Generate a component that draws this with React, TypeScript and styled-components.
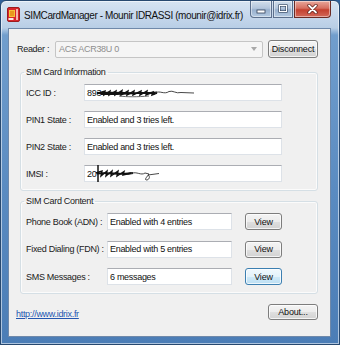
import React from 'react';
import styled, { createGlobalStyle } from 'styled-components';

const Global = createGlobalStyle`
  html, body { margin: 0; padding: 0; }
  body {
    width: 340px;
    height: 345px;
    overflow: hidden;
    background: #2f609a;
    font-family: "Liberation Sans", Arial, sans-serif;
  }
`;

const Window = styled.div`
  box-sizing: border-box;
  width: 340px;
  height: 345px;
  display: flex;
  flex-direction: column;
  padding: 0 8px 7px 7px;
  border: 1px solid #27486f;
  border-radius: 6px 6px 0 0;
  background: linear-gradient(
    180deg,
    #d6e3f1 0px,
    #c7d8ec 14px,
    #b8cee6 27px,
    #719ecd 34px,
    #5a8bc1 55%,
    #4b7db6 100%
  );
  box-shadow: inset 0 0 0 1px rgba(255, 255, 255, 0.55);
`;

const TitleBar = styled.div`
  height: 27px;
  display: flex;
  align-items: center;
  gap: 4px;
`;

const TitleText = styled.span`
  font-size: 10px;
  letter-spacing: -0.4px;
  color: #111;
  margin-top: 1px;
`;

const CaptionGroup = styled.div`
  margin-left: auto;
  align-self: flex-start;
  display: flex;
  gap: 1px;
`;

const CaptionButton = styled.div<{ $kind: 'min' | 'max' | 'close' }>`
  box-sizing: border-box;
  height: 17px;
  width: ${(p) => (p.$kind === 'close' ? 37 : p.$kind === 'min' ? 22 : 20)}px;
  display: flex;
  align-items: center;
  justify-content: center;
  border: 1px solid ${(p) => (p.$kind === 'close' ? '#6b2a24' : '#5b6f8c')};
  border-top: none;
  border-radius: ${(p) =>
    p.$kind === 'min' ? '0 0 0 4px' : p.$kind === 'close' ? '0 0 4px 0' : '0'};
  background: ${(p) =>
    p.$kind === 'close'
      ? 'linear-gradient(180deg, #e8a89c 0%, #d66f60 45%, #c4402f 55%, #d2685a 100%)'
      : 'linear-gradient(180deg, #d2deeb 0%, #b3c6dc 45%, #98b0cd 55%, #b3c9e1 100%)'};
  box-shadow: inset 0 0 0 1px rgba(255, 255, 255, 0.45);
`;

const Client = styled.div`
  flex: 1;
  box-sizing: border-box;
  background: #f0f0f0;
  border: 1px solid #6f89aa;
  display: flex;
  flex-direction: column;
  padding-top: 11px;
`;

const ReaderRow = styled.div`
  display: flex;
  align-items: center;
  height: 18px;
  margin-left: 8px;
`;

const FieldLabel = styled.span<{ $w: number }>`
  width: ${(p) => p.$w}px;
  flex: none;
  font-size: 9px;
  letter-spacing: -0.3px;
  color: #1a1a1a;
  white-space: nowrap;
`;

const ComboBox = styled.div`
  box-sizing: border-box;
  width: 208px;
  height: 17px;
  display: flex;
  align-items: center;
  padding-left: 3px;
  border: 1px solid #c5c5c5;
  border-radius: 2px;
  background: #f5f5f5;
  color: #8e8e8e;
  font-size: 9px;
  letter-spacing: -0.3px;
`;

const ComboArrow = styled.svg`
  margin-left: auto;
  margin-right: 5px;
`;

const PushButton = styled.button<{ $w: number; $h: number; $focused?: boolean; $gapLeft?: number }>`
  box-sizing: border-box;
  width: ${(p) => p.$w}px;
  height: ${(p) => p.$h}px;
  margin: 0 0 0 ${(p) => p.$gapLeft ?? 0}px;
  padding: 0;
  flex: none;
  font-family: inherit;
  font-size: 9px;
  letter-spacing: -0.2px;
  color: #111;
  border: 1px solid ${(p) => (p.$focused ? '#3c7fb1' : '#7d7d7d')};
  border-radius: 3px;
  background: ${(p) =>
    p.$focused
      ? 'linear-gradient(180deg, #f0f8fd 0%, #e3f2fb 50%, #cfe9f8 51%, #bcdff3 100%)'
      : 'linear-gradient(180deg, #f4f4f4 0%, #ececec 50%, #dfdfdf 51%, #d2d2d2 100%)'};
  box-shadow: inset 0 0 0 1px rgba(255, 255, 255, 0.75);
`;

const GroupBox = styled.fieldset<{ $top: number; $gap: number }>`
  box-sizing: border-box;
  width: 298px;
  min-width: 0;
  margin: ${(p) => p.$top}px 0 0 11px;
  padding: 6px 5px 8px 5px;
  border: 1px solid #d5dfe5;
  border-radius: 3px;
  box-shadow: inset 0 0 0 1px #fbfbfb;
  display: flex;
  flex-direction: column;
  gap: ${(p) => p.$gap}px;
`;

const GroupLegend = styled.legend`
  padding: 0 2px;
  margin-left: -2px;
  font-size: 9px;
  line-height: 11px;
  letter-spacing: -0.3px;
  color: #1a1a1a;
`;

const FieldRow = styled.div`
  display: flex;
  align-items: center;
  height: 17px;
`;

const TextBox = styled.div<{ $w: number }>`
  box-sizing: border-box;
  width: ${(p) => p.$w}px;
  height: 17px;
  flex: none;
  display: flex;
  align-items: center;
  padding-left: 2px;
  background: #fff;
  border: 1px solid #dde2e8;
  border-top-color: #abadb3;
  font-size: 9px;
  letter-spacing: -0.3px;
  color: #111;
  white-space: nowrap;
`;

const Scribble = styled.svg<{ $shift: number }>`
  flex: none;
  margin-left: ${(p) => p.$shift}px;
  overflow: visible;
`;

const ViewSlot = styled.div`
  margin-left: 13px;
  display: flex;
`;

const BottomRow = styled.div`
  margin-top: 10px;
  padding: 0 12px 0 7px;
  display: flex;
  align-items: center;
  justify-content: space-between;
`;

const SiteLink = styled.a`
  margin-top: 4px;
  font-size: 9px;
  letter-spacing: -0.3px;
  color: #2456b0;
  text-decoration: underline;
`;

const AppIcon = () => (
  <svg width="13" height="15" viewBox="0 0 13 15" style={{ marginLeft: -1, flex: 'none' }}>
    <rect x="0.5" y="0.5" width="12" height="14" rx="1.5" fill="#d9262b" stroke="#9c1b1e" />
    <rect x="2" y="3" width="6" height="7" fill="#f6c33a" />
    <rect x="3" y="4" width="4" height="5" fill="#e89a1e" />
    <rect x="1.5" y="11" width="5" height="2" fill="#fbe8e4" />
    <rect x="9" y="2" width="2" height="11" fill="#f3b5ad" />
  </svg>
);

const MinGlyph = () => (
  <svg width="10" height="10" viewBox="0 0 10 10">
    <rect x="1" y="6" width="8" height="3" fill="#fff" stroke="#33435a" strokeWidth="0.8" />
  </svg>
);

const MaxGlyph = () => (
  <svg width="10" height="10" viewBox="0 0 10 10">
    <rect x="1.5" y="1.5" width="7" height="6" fill="none" stroke="#33435a" strokeWidth="2.2" />
    <rect x="1.5" y="1.5" width="7" height="6" fill="none" stroke="#fff" strokeWidth="1" />
  </svg>
);

const CloseGlyph = () => (
  <svg width="11" height="10" viewBox="0 0 11 10">
    <path d="M2 1.5 L9 8.5 M9 1.5 L2 8.5" stroke="#5a1c17" strokeWidth="3.2" strokeLinecap="round" />
    <path d="M2 1.5 L9 8.5 M9 1.5 L2 8.5" stroke="#fff" strokeWidth="1.8" strokeLinecap="round" />
  </svg>
);

const IccScribble = () => (
  <Scribble $shift={-4} width="100" height="14" viewBox="0 0 100 14">
    <path
      d="M2 7 L8 5 L7 9 L13 5 L12 9 L19 5 L18 9 L25 4.5 L24 9 L31 5 L30 9 L37 5 L36 9 L44 5 L43 9 L50 5 L49 9 L56 6 L55 9 L60 7"
      fill="none"
      stroke="#111"
      strokeWidth="1.4"
    />
    <path d="M0 7 C20 5.5, 40 8.5, 60 6.5 M4 8 C24 9, 42 5.5, 58 7.5" fill="none" stroke="#111" strokeWidth="1.8" />
    <path d="M22 10 C30 11, 40 11, 52 10" fill="none" stroke="#444" strokeWidth="0.8" />
    <path
      d="M58 7 C63 4, 67 9, 72 5.5 C76 4, 79 8, 84 6.5 L97 7"
      fill="none"
      stroke="#333"
      strokeWidth="0.9"
    />
  </Scribble>
);

const ImsiScribble = () => (
  <Scribble $shift={-3} width="70" height="20" viewBox="0 0 70 20">
    <path d="M5 1 L5 18" stroke="#111" strokeWidth="1.5" />
    <path
      d="M3 9 L9 7 L8 12 L14 7 L13 12 L19 7 L18 12 L25 7 L24 12 L31 7.5 L30 11 L38 9"
      fill="none"
      stroke="#111"
      strokeWidth="1.4"
    />
    <path d="M4 9.5 C16 8, 28 11.5, 40 9" fill="none" stroke="#111" strokeWidth="1.8" />
    <path
      d="M38 9.5 C44 7, 48 12, 52 9 L56 10 C53 14, 51 16, 54 16 C57 15, 57 12, 55 11 L66 9.5"
      fill="none"
      stroke="#333"
      strokeWidth="0.9"
    />
  </Scribble>
);

const infoRows = [
  { label: 'ICC ID :', value: '893', scribble: <IccScribble /> },
  { label: 'PIN1 State :', value: 'Enabled and 3 tries left.' },
  { label: 'PIN2 State :', value: 'Enabled and 3 tries left.' },
  { label: 'IMSI :', value: '20', scribble: <ImsiScribble /> },
];

const contentRows = [
  { label: 'Phone Book (ADN) :', value: 'Enabled with 4 entries' },
  { label: 'Fixed Dialing (FDN) :', value: 'Enabled with 5 entries' },
  { label: 'SMS Messages :', value: '6 messages', focused: true },
];

export default function App() {
  return (
    <>
      <Global />
      <Window>
        <TitleBar>
          <AppIcon />
          <TitleText>SIMCardManager - Mounir IDRASSI (mounir@idrix.fr)</TitleText>
          <CaptionGroup>
            <CaptionButton $kind="min">
              <MinGlyph />
            </CaptionButton>
            <CaptionButton $kind="max">
              <MaxGlyph />
            </CaptionButton>
            <CaptionButton $kind="close">
              <CloseGlyph />
            </CaptionButton>
          </CaptionGroup>
        </TitleBar>
        <Client>
          <ReaderRow>
            <FieldLabel $w={38}>Reader :</FieldLabel>
            <ComboBox>
              ACS ACR38U 0
              <ComboArrow width="6" height="4" viewBox="0 0 6 4">
                <path d="M0 0 L6 0 L3 4 Z" fill="#a8a8a8" />
              </ComboArrow>
            </ComboBox>
            <PushButton $w={50} $h={18} $gapLeft={5}>
              Disconnect
            </PushButton>
          </ReaderRow>

          <GroupBox $top={9} $gap={10}>
            <GroupLegend>SIM Card Information</GroupLegend>
            {infoRows.map((r) => (
              <FieldRow key={r.label}>
                <FieldLabel $w={58}>{r.label}</FieldLabel>
                <TextBox $w={198}>
                  {r.value}
                  {r.scribble}
                </TextBox>
              </FieldRow>
            ))}
          </GroupBox>

          <GroupBox $top={5} $gap={10.5}>
            <GroupLegend>SIM Card Content</GroupLegend>
            {contentRows.map((r) => (
              <FieldRow key={r.label}>
                <FieldLabel $w={81}>{r.label}</FieldLabel>
                <TextBox $w={125}>{r.value}</TextBox>
                <ViewSlot>
                  <PushButton $w={37} $h={17} $focused={r.focused}>
                    View
                  </PushButton>
                </ViewSlot>
              </FieldRow>
            ))}
          </GroupBox>

          <BottomRow>
            <SiteLink href="#">http://www.idrix.fr</SiteLink>
            <PushButton $w={50} $h={16}>
              About...
            </PushButton>
          </BottomRow>
        </Client>
      </Window>
    </>
  );
}
